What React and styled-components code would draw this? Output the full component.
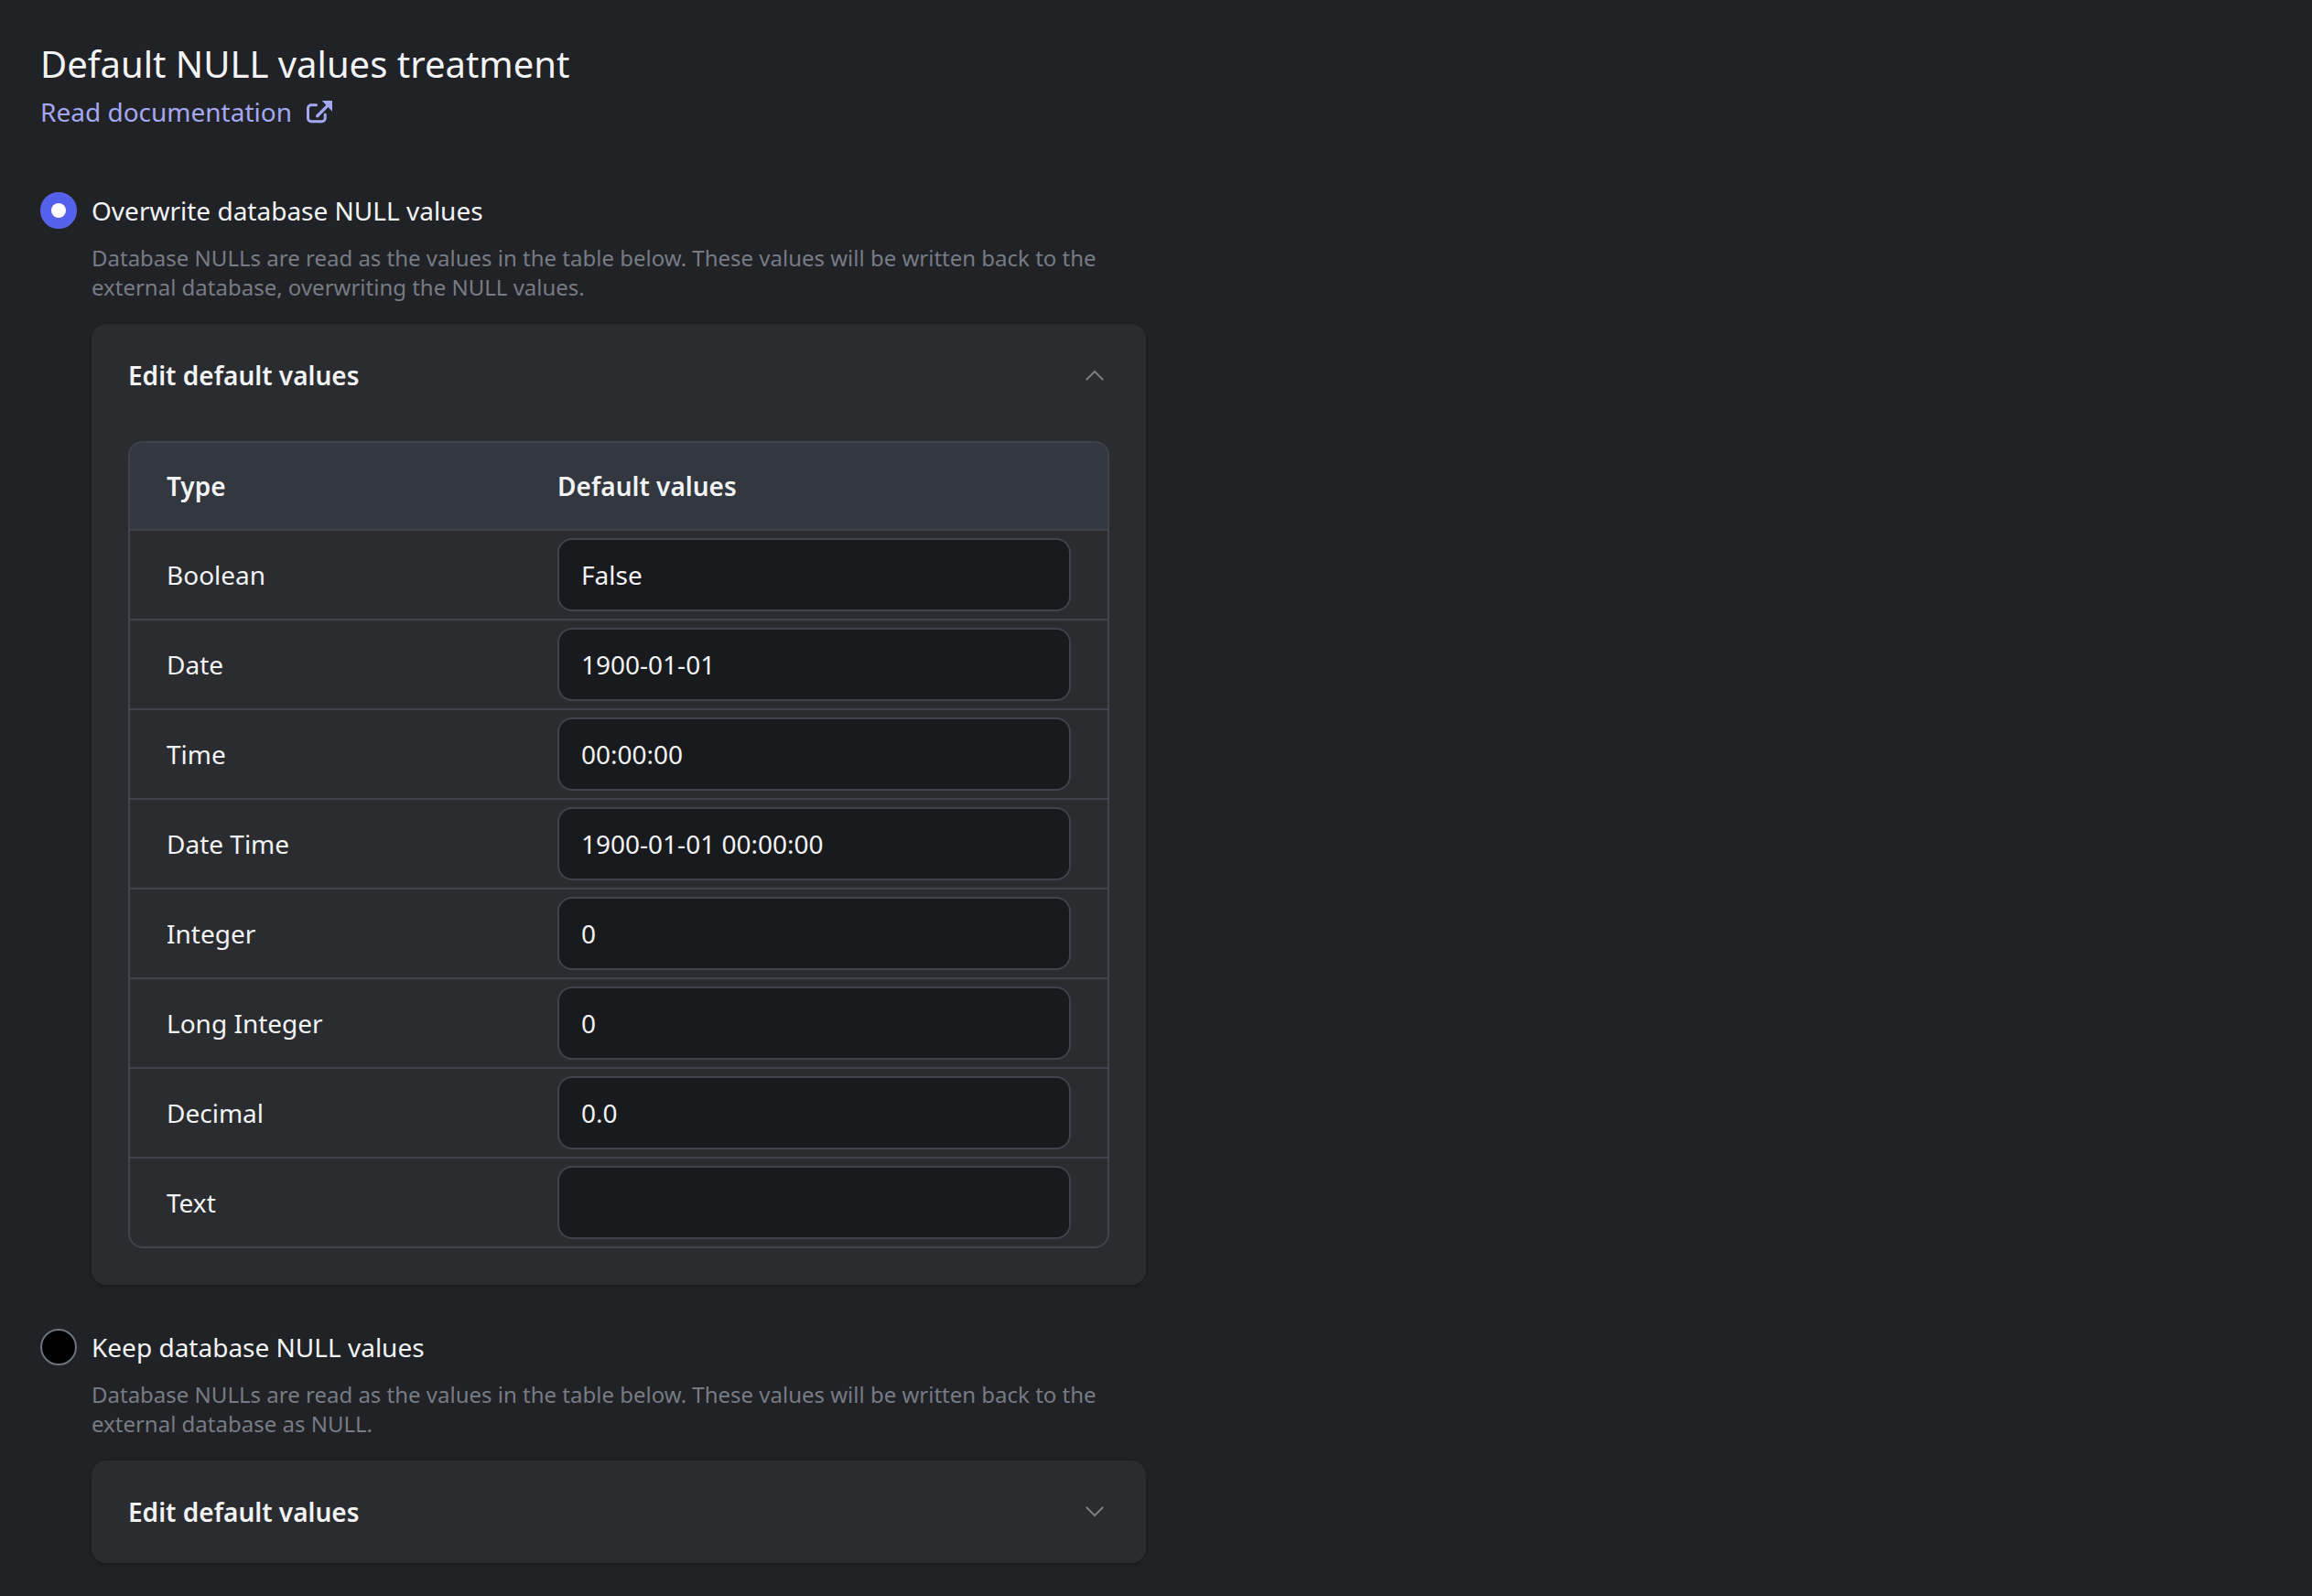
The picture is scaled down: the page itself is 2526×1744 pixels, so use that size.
import React from "react";
import styled, { createGlobalStyle } from "styled-components";

const GlobalStyle = createGlobalStyle`
  html, body {
    margin: 0;
    padding: 0;
    background: #212226;
  }
`;

const Page = styled.div`
  box-sizing: border-box;
  min-height: 100vh;
  padding: 44px 44px 36px;
  background: #212226;
  color: #f2f3f5;
  font-family: "Noto Sans", "Open Sans", sans-serif;
`;

const Title = styled.h1`
  margin: 0;
  font-size: 40px;
  line-height: 52px;
  font-weight: 400;
`;

const DocLink = styled.a`
  display: flex;
  align-items: center;
  gap: 16px;
  font-size: 28px;
  line-height: 52px;
  color: #a4a8f0;
  text-decoration: none;
`;

const Options = styled.div`
  display: flex;
  flex-direction: column;
  gap: 48px;
  width: 1208px;
  margin-top: 62px;
`;

const OptionHead = styled.label`
  display: flex;
  align-items: center;
  gap: 16px;
  font-size: 28px;
  line-height: 40px;
`;

const Radio = styled.span`
  box-sizing: border-box;
  display: flex;
  align-items: center;
  justify-content: center;
  flex: none;
  width: 40px;
  height: 40px;
  border-radius: 50%;
  border: 2px solid ${(p) => (p.$checked ? "#5865ea" : "#6b7280")};
  background: ${(p) => (p.$checked ? "#5360ea" : "#000")};
`;

const RadioDot = styled.span`
  width: 16px;
  height: 16px;
  border-radius: 50%;
  background: #fff;
`;

const Description = styled.p`
  margin: 16px 0 0 56px;
  font-size: 24px;
  line-height: 32px;
  color: #777b84;
`;

const Card = styled.section`
  margin: 24px 0 0 56px;
  padding: 0 40px;
  background: #2b2c30;
  border-radius: 16px;
  box-shadow: 0 1px 4px rgba(0, 0, 0, 0.3);
`;

const CardHead = styled.div`
  display: flex;
  align-items: center;
  justify-content: space-between;
  height: 112px;
  font-size: 28px;
  font-weight: 600;
`;

const Chevron = styled.svg`
  width: 20px;
  height: 12px;
  margin-right: 6px;
  fill: none;
  stroke: #7b7c80;
  stroke-width: 2;
`;

const CardBody = styled.div`
  padding: 16px 0 40px;
`;

const Table = styled.div`
  border: 2px solid #3e434c;
  border-radius: 16px;
  overflow: hidden;
`;

const Row = styled.div`
  display: grid;
  grid-template-columns: 427px 1fr;
  align-items: center;
  padding: 8px 0;
  border-bottom: 2px solid #3e434c;
  font-size: 28px;

  &:last-child {
    border-bottom: none;
  }
`;

const HeadRow = styled(Row)`
  height: 78px;
  background: #33373f;
  font-weight: 600;
`;

const TypeCell = styled.div`
  padding-left: 40px;
`;

const ValueCell = styled.div`
  padding: 0 40px;
`;

const ValueInput = styled.input`
  box-sizing: border-box;
  display: block;
  width: 100%;
  height: 80px;
  padding: 0 24px;
  border: 2px solid #3e434c;
  border-radius: 16px;
  outline: none;
  background: #191a1d;
  color: #f2f3f5;
  font-family: inherit;
  font-size: 28px;
`;

const defaults = [
  ["Boolean", "False"],
  ["Date", "1900-01-01"],
  ["Time", "00:00:00"],
  ["Date Time", "1900-01-01 00:00:00"],
  ["Integer", "0"],
  ["Long Integer", "0"],
  ["Decimal", "0.0"],
  ["Text", ""],
];

function ExternalIcon() {
  return (
    <svg width="28" height="25" viewBox="0 0 28 25" fill="none">
      <path
        d="M10.5 4.8H5a3.5 3.5 0 0 0-3.5 3.5V19.3a3.5 3.5 0 0 0 3.5 3.5H16.7a3.5 3.5 0 0 0 3.5-3.5V15"
        stroke="#a4a8f0"
        strokeWidth="3"
        strokeLinecap="round"
      />
      <path d="M11.7 16.7L22 6.4" stroke="#a4a8f0" strokeWidth="3.4" strokeLinecap="round" />
      <path d="M16.7 0H28V11.7Z" fill="#a4a8f0" />
    </svg>
  );
}

function EditDefaults({ open }) {
  return (
    <Card>
      <CardHead>
        Edit default values
        <Chevron viewBox="0 0 20 12">
          <polyline points={open ? "0.7,11.3 10,2 19.3,11.3" : "0.7,0.7 10,10 19.3,0.7"} />
        </Chevron>
      </CardHead>
      {open && (
        <CardBody>
          <Table>
            <HeadRow>
              <TypeCell>Type</TypeCell>
              <ValueCell>Default values</ValueCell>
            </HeadRow>
            {defaults.map(([type, value]) => (
              <Row key={type}>
                <TypeCell>{type}</TypeCell>
                <ValueCell>
                  <ValueInput defaultValue={value} />
                </ValueCell>
              </Row>
            ))}
          </Table>
        </CardBody>
      )}
    </Card>
  );
}

export default function App() {
  return (
    <Page>
      <GlobalStyle />
      <Title>Default NULL values treatment</Title>
      <DocLink href="#">
        Read documentation
        <ExternalIcon />
      </DocLink>
      <Options>
        <div>
          <OptionHead>
            <Radio $checked>
              <RadioDot />
            </Radio>
            Overwrite database NULL values
          </OptionHead>
          <Description>
            Database NULLs are read as the values in the table below. These values will be written
            back to the external database, overwriting the NULL values.
          </Description>
          <EditDefaults open />
        </div>
        <div>
          <OptionHead>
            <Radio />
            Keep database NULL values
          </OptionHead>
          <Description>
            Database NULLs are read as the values in the table below. These values will be written
            back to the external database as NULL.
          </Description>
          <EditDefaults />
        </div>
      </Options>
    </Page>
  );
}
